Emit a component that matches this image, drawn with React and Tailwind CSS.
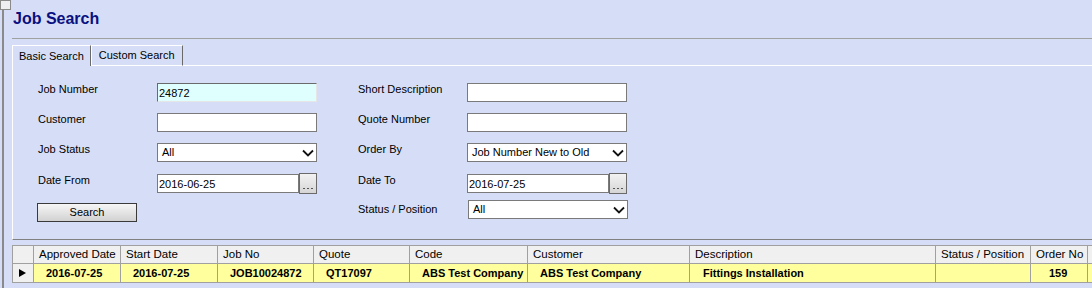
function Chevron() {
  return (
    <svg width="12" height="8" viewBox="0 0 12 8" className="shrink-0">
      <polyline points="1,1.5 6,6.5 11,1.5" fill="none" stroke="#111" strokeWidth="1.8" />
    </svg>
  );
}

function TextBox({ value = "", className = "" }) {
  return (
    <input
      readOnly
      value={value}
      className={`h-[19px] w-[160px] border border-[#7a7a7a] bg-white px-[1px] text-[11px] leading-[17px] text-black outline-none ${className}`}
    />
  );
}

function SelectBox({ value, className = "" }) {
  return (
    <div
      className={`flex h-[19px] w-[160px] items-center justify-between border border-[#7a7a7a] bg-white pl-[4px] pr-[2px] text-[11px] ${className}`}
    >
      <span>{value}</span>
      <Chevron />
    </div>
  );
}

function DateBox({ value }) {
  return (
    <div className="flex h-[19px] w-[160px] items-start">
      <input
        readOnly
        value={value}
        className="h-[19px] w-[142px] border border-[#7a7a7a] bg-white px-[1px] text-[11px] leading-[17px] outline-none"
      />
      <div className="-mt-[1px] flex h-[21px] w-[18px] items-end justify-center border border-[#6a6a6a] bg-gradient-to-b from-[#f2f2f2] to-[#d6d6d6] pb-[4px]">
        <div className="flex gap-[2px]">
          <span className="h-[1px] w-[2px] bg-[#555]" />
          <span className="h-[1px] w-[2px] bg-[#555]" />
          <span className="h-[1px] w-[2px] bg-[#555]" />
        </div>
      </div>
    </div>
  );
}

const cols = [
  { w: "w-[87px]", h: "Approved Date", d: "2016-07-25", p: "pl-[12px]" },
  { w: "w-[97px]", h: "Start Date", d: "2016-07-25", p: "pl-[12px]" },
  { w: "w-[96px]", h: "Job No", d: "JOB10024872", p: "pl-[12px]" },
  { w: "w-[96px]", h: "Quote", d: "QT17097", p: "pl-[12px]" },
  { w: "w-[118px]", h: "Code", d: "ABS Test Company", p: "pl-[12px]" },
  { w: "w-[162px]", h: "Customer", d: "ABS Test Company", p: "pl-[12px]" },
  { w: "w-[246px]", h: "Description", d: "Fittings Installation", p: "pl-[13px]" },
  { w: "w-[95px]", h: "Status / Position", d: "", p: "pl-[12px]" },
  { w: "w-[57px]", h: "Order No", d: "159", p: "pl-[18px]" },
];

export default function App() {
  return (
    <div className="flex h-[288px] w-[1092px] overflow-hidden bg-[#d6def7] font-['Liberation_Sans',Arial,sans-serif] text-[11px] text-black">
      {/* left rail */}
      <div className="flex w-[12px] shrink-0 flex-col">
        <div className="h-[10px] w-[11px] border border-[#8a8a8a] bg-[#eceef2]" />
        <div className="ml-[2px] w-[2px] flex-1 bg-[#8a8a8a]" />
      </div>

      <div className="flex min-w-0 flex-1 flex-col">
        {/* title */}
        <div className="h-[39px] border-b border-[#a0a0a0] pl-[1px] pt-[10px]">
          <h1 className="text-[16px] font-bold leading-[18px] text-[#0a1080]">Job Search</h1>
        </div>

        {/* tabs */}
        <div className="mt-[6px] flex h-[21px]">
          <div className="h-[21px] border-l border-t border-r border-l-white border-t-white border-r-[#6a6a6a] px-[6px] pt-[4px] leading-[13px]">
            Basic Search
          </div>
          <div className="h-[21px] border border-l-white border-t-white border-r-[#6a6a6a] border-b-white px-[7px] pt-[3px] leading-[13px]">
            Custom Search
          </div>
          <div className="flex-1 border-b border-white" />
        </div>

        {/* panel */}
        <div className="h-[174px] border-b border-l border-b-[#808080] border-l-white pl-[25px] pt-[17px]">
          <div className="flex h-[19px]">
            <div className="w-[119px] leading-[13px]">Job Number</div>
            <TextBox
              value="24872"
              className="border-t-[#6a6a6a] border-l-[#6a6a6a] border-r-[#e6e6e6] border-b-[#e6e6e6] !bg-[#dfffff]"
            />
            <div className="ml-[41px] w-[109px] leading-[13px]">Short Description</div>
            <TextBox />
          </div>
          <div className="mt-[11px] flex h-[19px]">
            <div className="w-[119px] leading-[13px]">Customer</div>
            <TextBox />
            <div className="ml-[41px] w-[109px] leading-[13px]">Quote Number</div>
            <TextBox />
          </div>
          <div className="mt-[11px] flex h-[19px]">
            <div className="w-[119px] leading-[13px]">Job Status</div>
            <SelectBox value="All" />
            <div className="ml-[41px] w-[109px] leading-[13px]">Order By</div>
            <SelectBox value="Job Number New to Old" />
          </div>
          <div className="mt-[12px] flex h-[19px]">
            <div className="w-[119px] leading-[13px]">Date From</div>
            <DateBox value="2016-06-25" />
            <div className="ml-[41px] w-[109px] leading-[13px]">Date To</div>
            <DateBox value="2016-07-25" />
          </div>
          <div className="mt-[7px] flex">
            <div className="w-[279px]">
              <button className="-ml-[1px] mt-[3px] flex h-[19px] w-[100px] items-center justify-center border border-[#3a3a3a] bg-gradient-to-b from-[#f6f6f6] to-[#d2d2d2] text-[11px] leading-[13px]">
                Search
              </button>
            </div>
            <div className="ml-[41px] w-[109px] pt-[3px] leading-[13px]">Status / Position</div>
            <SelectBox value="All" className="ml-[1px] w-[159px]" />
          </div>
        </div>

        {/* grid */}
        <div className="mt-[5px] flex flex-col border-l border-[#a0a0a0]">
          <div className="flex h-[19px] border-b border-t border-[#a0a0a0] bg-[#f0f0f0] text-[11.5px]">
            <div className="w-[21px] border-r border-[#a0a0a0]" />
            {cols.map((c) => (
              <div
                key={c.h}
                className={`${c.w} flex items-center overflow-hidden whitespace-nowrap border-r border-[#a0a0a0] pl-[5px]`}
              >
                {c.h}
              </div>
            ))}
            <div className="flex-1" />
          </div>
          <div className="flex h-[19px] border-b border-[#a0a0a0] bg-[#ffff9e] font-bold">
            <div className="flex w-[21px] items-center border-r border-[#a0a0a0] bg-[#f0f0f0] pl-[6px]">
              <svg width="7" height="8" viewBox="0 0 7 8">
                <polygon points="0,0 7,4 0,8" fill="#000" />
              </svg>
            </div>
            {cols.map((c) => (
              <div
                key={c.h}
                className={`${c.w} flex items-center overflow-hidden whitespace-nowrap border-r border-[#a0a0a0] ${c.p}`}
              >
                {c.d}
              </div>
            ))}
            <div className="flex-1" />
          </div>
        </div>
      </div>
    </div>
  );
}
